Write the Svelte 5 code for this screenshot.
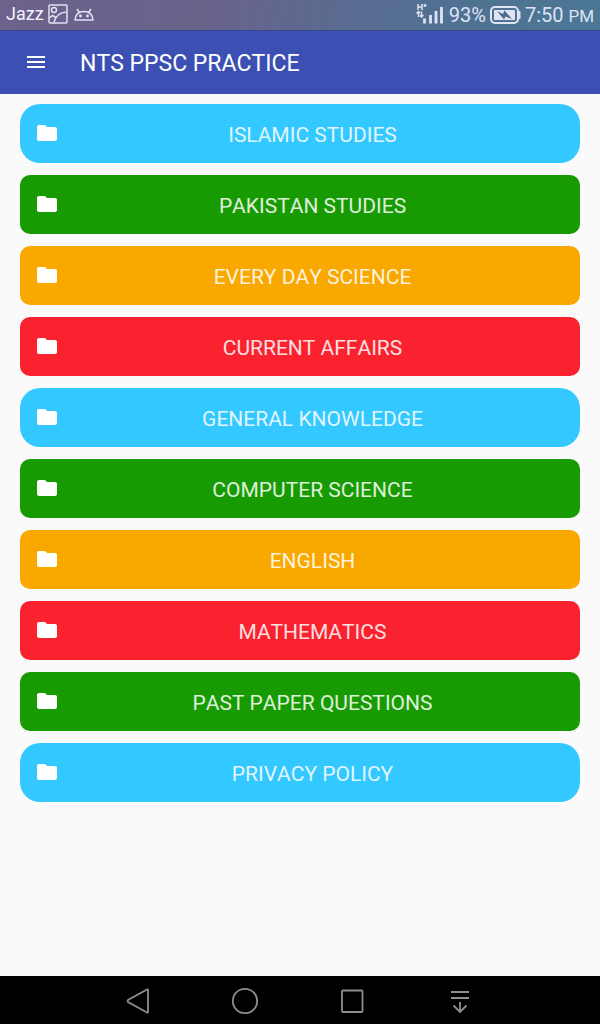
<script>
  const topics = [
    { name: 'ISLAMIC STUDIES', tone: 'blue' },
    { name: 'PAKISTAN STUDIES', tone: 'green' },
    { name: 'EVERY DAY SCIENCE', tone: 'amber' },
    { name: 'CURRENT AFFAIRS', tone: 'red' },
    { name: 'GENERAL KNOWLEDGE', tone: 'blue' },
    { name: 'COMPUTER SCIENCE', tone: 'green' },
    { name: 'ENGLISH', tone: 'amber' },
    { name: 'MATHEMATICS', tone: 'red' },
    { name: 'PAST PAPER QUESTIONS', tone: 'green' },
    { name: 'PRIVACY POLICY', tone: 'blue' }
  ];
</script>

<div class="screen">
  <div class="status">
    <div class="group left">
      <span class="carrier">Jazz</span>
      <svg width="20" height="20" viewBox="0 0 20 20" fill="none" stroke="currentColor" stroke-width="1.5">
        <rect x="1" y="1" width="18" height="18" rx="1" />
        <circle cx="6" cy="6" r="2.5" />
        <path d="M1.500 14L4.500 11.500L8 13.500M6 18.500C7.500 12 11 8.500 18.500 8" />
      </svg>
      <svg class="droid" width="20" height="13" viewBox="0 0 20 13" fill="none" stroke="currentColor" stroke-width="1.5" stroke-linejoin="round">
        <path d="M1 12C1.500 6.500 5 3.500 10 3.500S18.500 6.500 19 12ZM3 1L5.500 4.800M17 1L14.500 4.800" />
        <circle cx="6.500" cy="8" r=".7" fill="currentColor" />
        <circle cx="13.500" cy="8" r=".7" fill="currentColor" />
      </svg>
    </div>
    <div class="group right">
      <svg width="28" height="22" viewBox="0 0 28 22" fill="none" stroke="currentColor">
        <path stroke-width="1.500" d="M3 0V6M7 0V6M3 3H7M8.500 1.500H11.500M10 0V3" />
        <path stroke-width="1.500" d="M3.500 7.500V13M1.500 9.500L3.500 7.500L5 9M6.500 7.500V13M5 11.500L6.500 13L8.500 11" />
        <path stroke-width="2.800" d="M9.500 14.500V19.500M15.500 11V19.500M21 7V19.500M26.500 3V19.500" />
      </svg>
      <span class="percent">93%</span>
      <svg width="31" height="18" viewBox="0 0 31 18">
        <rect x="1" y="1" width="27" height="16" rx="4" fill="none" stroke="currentColor" stroke-width="2" />
        <rect x="4" y="4" width="21" height="10" rx="1" fill="currentColor" />
        <path d="M28 5h1.500q1 0 1 1v6q0 1-1 1H28z" fill="currentColor" />
        <path d="M7 5L13 8L14.500 4.500L22 13L15.500 10.500L14 13.500Z" fill="#4f6c8e" />
      </svg>
      <span class="clock">7:50 <small>PM</small></span>
    </div>
  </div>

  <header>
    <button class="menu" aria-label="Open menu">
      <svg width="24" height="24" viewBox="0 0 24 24" fill="currentColor">
        <path d="M3 18h18v-2H3v2zm0-5h18v-2H3v2zm0-7v2h18V6H3z" />
      </svg>
    </button>
    <h1>NTS PPSC PRACTICE</h1>
  </header>

  <main>
    {#each topics as topic}
      <button class="topic {topic.tone}">
        <svg width="24" height="24" viewBox="0 0 24 24" fill="currentColor">
          <path d="M10 4H4c-1.100 0-1.990.9-1.990 2L2 18c0 1.100.9 2 2 2h16c1.100 0 2-.9 2-2V8c0-1.100-.9-2-2-2h-8l-2-2z" />
        </svg>
        <span>{topic.name}</span>
      </button>
    {/each}
  </main>

  <nav>
    <button aria-label="Back">
      <svg width="28" height="28" viewBox="0 0 28 28"><path d="M24 3V25Q24 26 23 25.500L4 15Q3 14 4 13L23 2.500Q24 2 24 3Z" /></svg>
    </button>
    <button aria-label="Home">
      <svg width="28" height="28" viewBox="0 0 28 28"><circle cx="14" cy="14" r="12.200" /></svg>
    </button>
    <button aria-label="Recent apps">
      <svg width="28" height="28" viewBox="0 0 28 28"><rect x="3" y="3.500" width="20.500" height="21.500" rx="1" /></svg>
    </button>
    <button aria-label="Notifications">
      <svg width="28" height="28" viewBox="0 0 28 28"><path d="M5 5H23M5 11H23M14 15V25M7.500 18.500L14 25L20.500 18.500" /></svg>
    </button>
  </nav>
</div>

<style>
  :global(body) {
    margin: 0;
  }
  .screen {
    display: flex;
    flex-direction: column;
    min-height: 100vh;
    background: #fafafa;
    font-family: Roboto, sans-serif;
    font-kerning: none;
  }
  button {
    border: 0;
    padding: 0;
    background: none;
    font: inherit;
    font-kerning: inherit;
    color: inherit;
    cursor: pointer;
  }
  svg {
    display: block;
    flex: none;
  }
  .status {
    display: flex;
    justify-content: space-between;
    box-sizing: border-box;
    height: 30px;
    padding: 0 6px;
    color: #dfe3f4;
    background: linear-gradient(100deg, #6c628c 0%, #69638c 35%, #576c91 62%, #507191 75%, #4b7896 100%);
  }
  .group {
    display: flex;
    align-items: center;
    height: 28px;
  }
  .left {
    gap: 4px;
  }
  .droid {
    margin-left: 2px;
  }
  .carrier {
    color: #f4f2fb;
    font-size: 18px;
    line-height: 24px;
  }
  .right {
    gap: 4px;
    font-size: 20px;
    padding-top: 1px;
  }
  .percent {
    margin-left: 2px;
  }
  .clock small {
    font-size: 17px;
  }
  header {
    display: flex;
    align-items: center;
    gap: 32px;
    height: 64px;
    padding: 0 24px;
    color: #fff;
    background: #3c50b4;
    box-shadow: inset 0 1px #39478f;
  }
  h1 {
    margin: 0;
    padding-top: 4px;
    font-size: 23px;
    font-weight: 400;
    line-height: 32px;
  }
  main {
    flex: 1;
    display: flex;
    flex-direction: column;
    gap: 12px;
    padding: 10px 20px 20px;
  }
  .topic {
    display: flex;
    align-items: center;
    height: 59px;
    padding: 0 14px 2px 15px;
    box-sizing: border-box;
    border-radius: 10px;
    color: #fff;
    font-size: 21px;
  }
  .topic span {
    flex: 1;
    line-height: 24px;
    padding-top: 4px;
    opacity: 0.85;
  }
  .topic.blue {
    border-radius: 20px;
    background: #33c8ff;
  }
  .green {
    background: #189b02;
  }
  .amber {
    background: #f9a800;
  }
  .red {
    background: #fb222f;
  }
  nav {
    display: flex;
    height: 48px;
    padding: 0 86px 0 84px;
    background: #000;
  }
  nav button {
    flex: 1;
    display: flex;
    align-items: center;
    justify-content: center;
    padding-top: 2px;
  }
  nav svg {
    fill: none;
    stroke: #8e8e8e;
    stroke-width: 1.8px;
  }
</style>
